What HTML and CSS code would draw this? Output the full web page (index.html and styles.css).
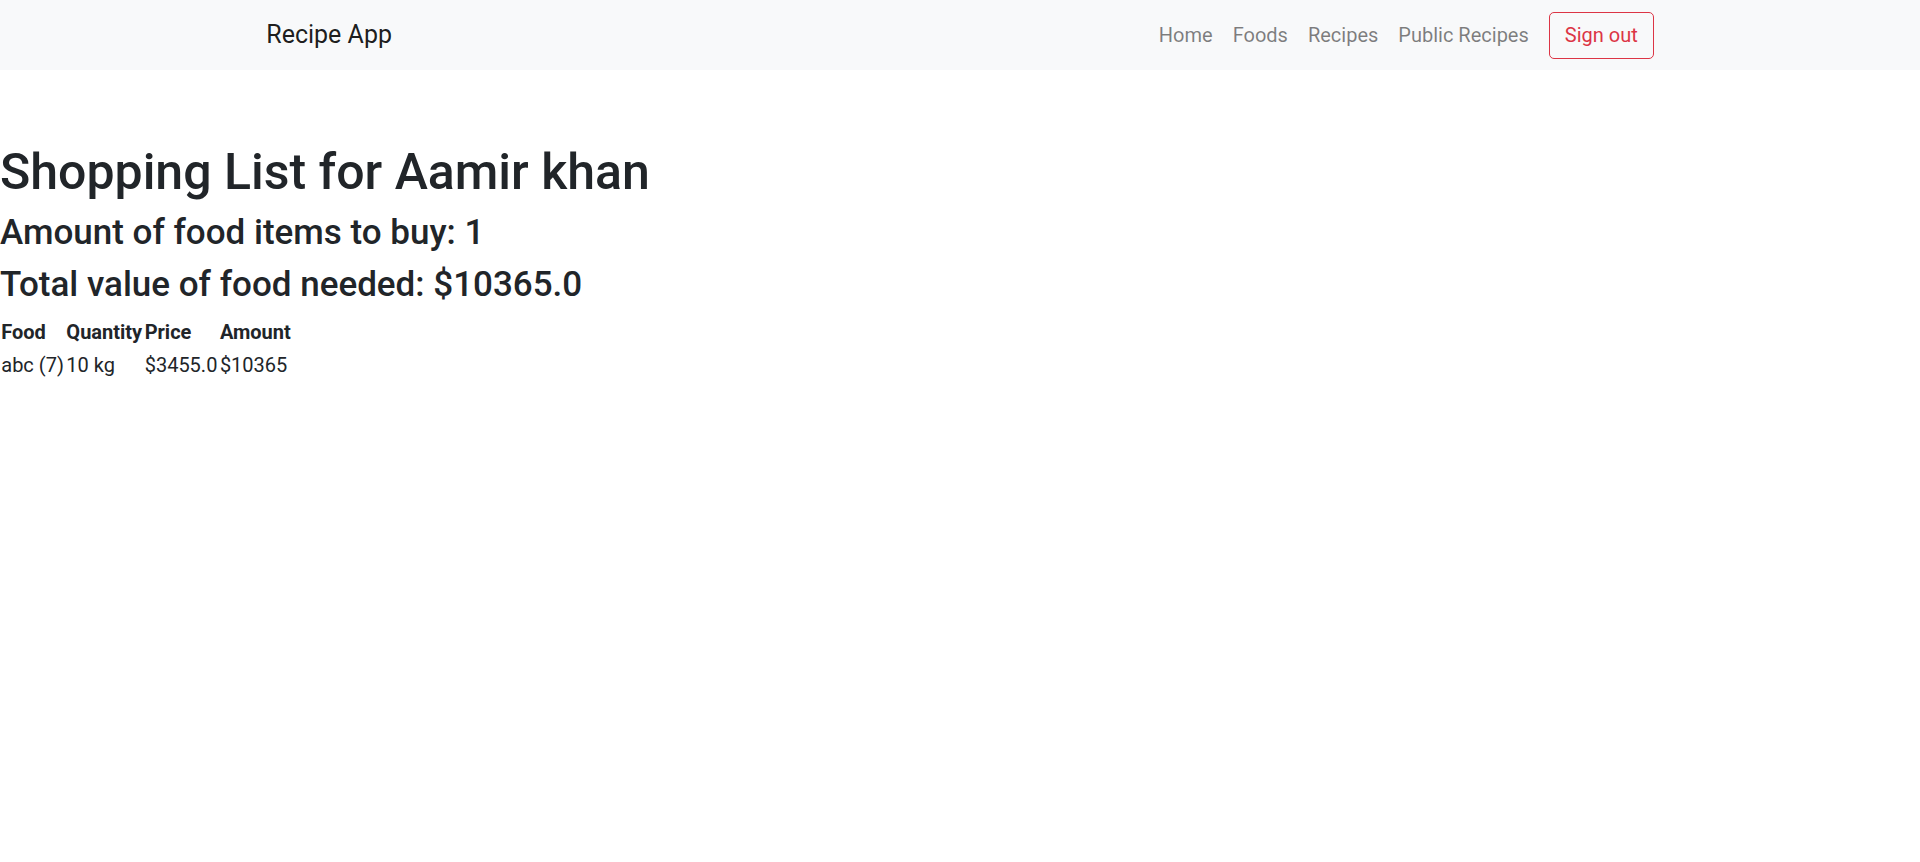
FILE: index.html
```html
<!DOCTYPE html>
<html lang="en">
<head>
<meta charset="utf-8">
<title>Recipe App</title>
<link rel="stylesheet" href="styles.css">
</head>
<body>
<nav class="navbar">
  <div class="nav-container">
    <a class="brand" href="#">Recipe App</a>
    <ul class="nav-list">
      <li><a class="nav-link" href="#">Home</a></li>
      <li><a class="nav-link" href="#">Foods</a></li>
      <li><a class="nav-link" href="#">Recipes</a></li>
      <li><a class="nav-link" href="#">Public Recipes</a></li>
      <li><button class="btn-signout" type="button">Sign out</button></li>
    </ul>
  </div>
</nav>
<main class="main">
  <h1 class="title">Shopping List for Aamir khan</h1>
  <h3 class="subtitle">Amount of food items to buy: 1</h3>
  <h3 class="subtitle">Total value of food needed: $10365.0</h3>
  <table class="list-table">
    <thead>
      <tr><th>Food</th><th>Quantity</th><th>Price</th><th>Amount</th></tr>
    </thead>
    <tbody>
      <tr><td>abc (7)</td><td>10 kg</td><td>$3455.0</td><td>$10365</td></tr>
    </tbody>
  </table>
</main>
</body>
</html>
```

FILE: styles.css
```css
* { box-sizing: border-box; }
html { font-size: 20px; }
body {
  margin: 0;
  font-family: Roboto, "Liberation Sans", sans-serif;
  font-size: 20px;
  line-height: 1.5;
  color: #212529;
  background: #fff;
}
.navbar {
  background: #f8f9fa;
  padding: 10px 20px;
  height: 70px;
}
.nav-container {
  max-width: 1425px;
  margin: 0 auto;
  padding: 0 18.75px;
  display: flex;
  align-items: center;
  justify-content: space-between;
  height: 50px;
}
.brand {
  font-size: 25px;
  line-height: 1.5;
  padding: 6.25px 0;
  margin-right: 20px;
  color: rgba(0,0,0,.9);
  text-decoration: none;
}
.nav-list {
  list-style: none;
  margin: 0;
  padding: 0;
  display: flex;
  align-items: center;
}
.nav-link {
  display: block;
  padding: 10px;
  color: rgba(0,0,0,.5);
  text-decoration: none;
}
.btn-signout {
  margin-left: 10px;
  font-family: inherit;
  font-size: 20px;
  line-height: 1.5;
  color: #dc3545;
  background: transparent;
  border: 1.25px solid #dc3545;
  border-radius: 5px;
  padding: 7.5px 15px;
}
.main {
  padding-top: 72px;
}
.title {
  font-size: 50px;
  font-weight: 500;
  line-height: 1.2;
  margin: 0 0 10px;
}
.subtitle {
  font-size: 35px;
  font-weight: 500;
  line-height: 1.2;
  margin: 0 0 10px;
}
.list-table {
  border-collapse: collapse;
}
.list-table th,
.list-table td {
  padding: 1.25px;
  text-align: left;
  vertical-align: top;
}
.list-table th {
  font-weight: 700;
}
```
